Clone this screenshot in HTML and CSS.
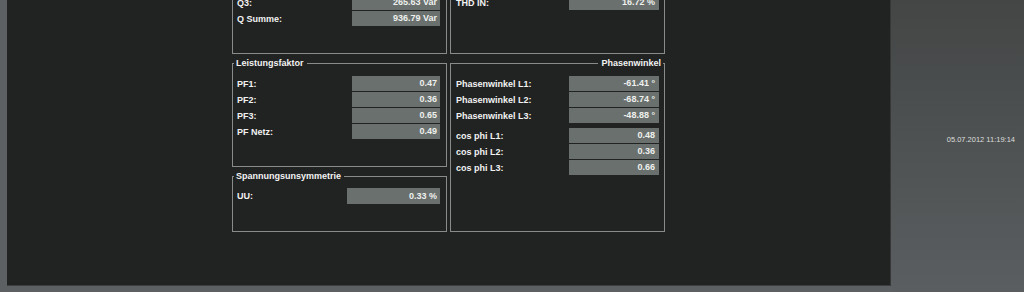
FILE: index.html
```html
<!DOCTYPE html>
<html lang="de">
<head>
    <meta charset="UTF-8">
    <meta name="viewport" content="width=device-width, initial-scale=1.0">
    <title>Messwerte</title>
    <link rel="stylesheet" href="styles.css">
</head>
<body>
    <div class="screen">
        <div class="panel">
            <div class="columns">
                <div class="column">
                    <fieldset class="group group-top">
                        <div class="row">
                            <span class="label">Q3:</span>
                            <span class="value">265.63 Var</span>
                        </div>
                        <div class="row">
                            <span class="label">Q Summe:</span>
                            <span class="value">936.79 Var</span>
                        </div>
                    </fieldset>

                    <fieldset class="group group-pf">
                        <legend>Leistungsfaktor</legend>
                        <div class="row">
                            <span class="label">PF1:</span>
                            <span class="value">0.47</span>
                        </div>
                        <div class="row">
                            <span class="label">PF2:</span>
                            <span class="value">0.36</span>
                        </div>
                        <div class="row">
                            <span class="label">PF3:</span>
                            <span class="value">0.65</span>
                        </div>
                        <div class="row">
                            <span class="label">PF Netz:</span>
                            <span class="value">0.49</span>
                        </div>
                    </fieldset>

                    <fieldset class="group group-uu">
                        <legend>Spannungsunsymmetrie</legend>
                        <div class="row row-uu">
                            <span class="label">UU:</span>
                            <span class="value">0.33 %</span>
                        </div>
                    </fieldset>
                </div>

                <div class="column column-right">
                    <fieldset class="group group-top">
                        <div class="row">
                            <span class="label">THD IN:</span>
                            <span class="value">16.72 %</span>
                        </div>
                    </fieldset>

                    <fieldset class="group group-phase">
                        <legend class="legend-right">Phasenwinkel</legend>
                        <div class="row-group">
                            <div class="row">
                                <span class="label">Phasenwinkel L1:</span>
                                <span class="value">-61.41 °</span>
                            </div>
                            <div class="row">
                                <span class="label">Phasenwinkel L2:</span>
                                <span class="value">-68.74 °</span>
                            </div>
                            <div class="row">
                                <span class="label">Phasenwinkel L3:</span>
                                <span class="value">-48.88 °</span>
                            </div>
                        </div>
                        <div class="row-group">
                            <div class="row">
                                <span class="label">cos phi L1:</span>
                                <span class="value">0.48</span>
                            </div>
                            <div class="row">
                                <span class="label">cos phi L2:</span>
                                <span class="value">0.36</span>
                            </div>
                            <div class="row">
                                <span class="label">cos phi L3:</span>
                                <span class="value">0.66</span>
                            </div>
                        </div>
                    </fieldset>
                </div>
            </div>
        </div>

        <div class="sidebar">
            <div class="timestamp">05.07.2012 11:19:14</div>
        </div>
    </div>
</body>
</html>
```

FILE: styles.css
```css
html, body {
    margin: 0;
    height: 100%;
}

body {
    background-color: #5d6062;
    font-family: "Liberation Sans", Arial, sans-serif;
    color: #f0f0f0;
    overflow: hidden;
}

.screen {
    display: flex;
    height: 292px;
    padding-left: 7px;
    box-sizing: border-box;
}

.panel {
    width: 884px;
    height: 286px;
    box-sizing: border-box;
    background-color: #212322;
    border-right: 1px solid #353837;
    border-bottom: 1px solid #3c3f3e;
    overflow: hidden;
}

.columns {
    display: flex;
    gap: 3px;
    margin-top: -20px;
    margin-left: 225px;
}

.column {
    width: 215px;
    display: flex;
    flex-direction: column;
    gap: 3px;
}

.group {
    margin: 0;
    min-width: 0;
    padding: 7px 6px 0 4px;
    border: 1px solid #888b8a;
    box-sizing: border-box;
    display: flex;
    flex-direction: column;
    gap: 1px;
}

.column-right .group {
    padding-left: 5px;
    padding-right: 5px;
}

.group legend {
    font-size: 9px;
    font-weight: bold;
    line-height: 12px;
    padding: 0 3px 0 2px;
    margin-left: -3px;
    color: #f2f2f2;
}

.group .legend-right {
    margin-left: auto;
    margin-right: -4px;
    padding: 0 2px 0 3px;
}

.group-top {
    height: 74px;
    padding-top: 14px;
}

.group-pf {
    height: 110px;
}

.group-uu {
    height: 62px;
    padding-top: 6px;
}

.group-phase {
    height: 175px;
    gap: 5px;
}

.row-group {
    display: flex;
    flex-direction: column;
    gap: 1px;
}

.row {
    display: flex;
    align-items: center;
    height: 15px;
    font-size: 9px;
    font-weight: bold;
}

.row-uu {
    height: 16px;
}

.label {
    flex: 1;
    color: #f2f2f2;
}

.value {
    width: 88px;
    height: 100%;
    box-sizing: border-box;
    padding-right: 3px;
    background-color: #6a706d;
    color: #eef0ee;
    text-align: right;
    line-height: 15px;
}

.row-uu .value {
    width: 93px;
    line-height: 16px;
}

.column-right .value {
    width: 90px;
    padding-right: 4px;
}

.sidebar {
    flex: 1;
    display: flex;
    align-items: center;
    justify-content: flex-end;
    padding-right: 9px;
    background: linear-gradient(to bottom, #434645, #5b5e60);
}

.timestamp {
    font-size: 7.5px;
    color: #dcdedd;
    margin-top: -14px;
}
```
